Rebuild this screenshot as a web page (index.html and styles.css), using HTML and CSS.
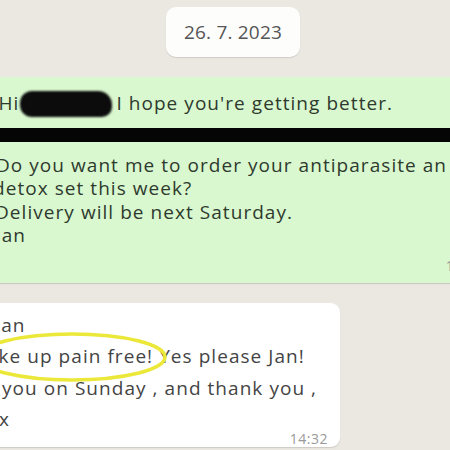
FILE: index.html
```html
<!DOCTYPE html>
<html>
<head>
<meta charset="utf-8">
<link rel="stylesheet" href="styles.css">
</head>
<body>
<div class="chat">
  <div class="date-row"><div class="date">26. 7. 2023</div></div>
  <div class="bubble out">
    <div class="line l-hi">Hi<span class="scribble"></span>I hope you're getting better.</div>
    <div class="redact"></div>
    <div class="line l-do">Do you want me to order your antiparasite an</div>
    <div class="line l-detox">detox set this week?</div>
    <div class="line l-del">Delivery will be next Saturday.</div>
    <div class="line l-jan">Jan</div>
    <div class="meta">14:29</div>
  </div>
  <div class="bubble in">
    <div class="line w-jan">Jan</div>
    <div class="line w-ke">ke up pain free! Yes please Jan!</div>
    <div class="line w-you">you on Sunday , and thank you ,</div>
    <div class="line w-x">x</div>
    <div class="meta">14:32</div>
  </div>
  <svg class="circle" width="200" height="60" viewBox="0 0 200 60">
    <ellipse cx="92" cy="27" rx="93" ry="23" fill="none" stroke="#ebe83a" stroke-width="3.5"/>
  </svg>
</div>
</body>
</html>
```

FILE: styles.css
```css
html, body {
  margin: 0;
  padding: 0;
}
body {
  width: 450px;
  height: 450px;
  overflow: hidden;
  background: #ebe7e1;
  font-family: "Open Sans", "Noto Sans", sans-serif;
}
.chat {
  position: relative;
  display: flex;
  flex-direction: column;
  height: 450px;
  overflow: hidden;
}
.date-row {
  display: flex;
  justify-content: center;
  padding: 7px 0 0 16px;
}
.date {
  width: 134px;
  height: 50px;
  background: #fdfdfc;
  border-radius: 10px;
  box-shadow: 0 1px 1px rgba(0,0,0,0.12);
  display: flex;
  align-items: center;
  justify-content: center;
  color: #555;
  font-size: 19px;
  letter-spacing: 0.2px;
}
.bubble {
  display: flex;
  flex-direction: column;
  font-size: 19px;
  letter-spacing: 1.05px;
  position: relative;
  flex-shrink: 0;
}
.line {
  white-space: nowrap;
}
.out {
  margin-top: 20px;
  width: 484px;
  background: #d9f8cf;
  color: #2f3a2e;
  padding: 15px 8px 5px 0;
  box-shadow: 0 1px 1px rgba(0,0,0,0.13);
  line-height: 23.5px;
}
.l-hi { margin-left: -1.5px; display: flex; align-items: center; }
.scribble {
  display: inline-block;
  width: 92px;
  height: 26px;
  margin: -1.5px 4px -1.5px 1px;
  background: #0c0c0c;
  border-radius: 12px 14px 10px 12px;
  filter: blur(0.8px);
}
.redact {
  margin: 12.5px -20px 0 0;
  height: 14px;
  background: #050505;
}
.l-do { margin-top: 11.5px; margin-left: -4px; }
.l-detox { margin-left: -7px; }
.l-del { margin-left: -5px; }
.l-jan { margin-left: -4.5px; }
.meta {
  align-self: flex-end;
  font-size: 14px;
  line-height: 14px;
  letter-spacing: 0.5px;
  color: #999;
}
.out .meta { margin-top: 11px; margin-bottom: 5px; }
.in {
  margin-top: 20px;
  width: 340px;
  height: 144px;
  box-sizing: border-box;
  background: #fff;
  border-radius: 0 9px 9px 0;
  color: #444;
  line-height: 31.5px;
  padding: 7px 12px 0 0;
  box-shadow: 0 1px 1px rgba(0,0,0,0.13);
}
.w-jan { margin-left: -5px; }
.w-ke { margin-left: -1.5px; }
.w-you { margin-left: 2px; }
.w-x { margin-left: -1px; }
.in .meta { margin-top: -4px; }
.circle {
  position: absolute;
  left: -20px;
  top: 330px;
}
```
